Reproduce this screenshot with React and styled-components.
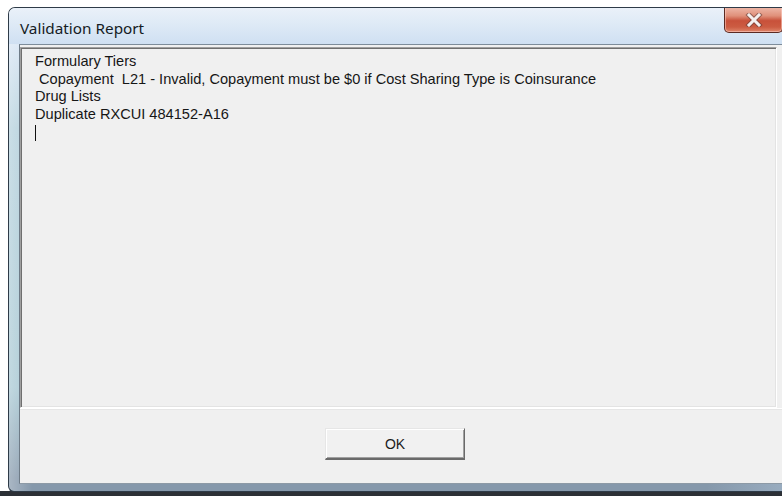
import React from "react";
import styled, { createGlobalStyle } from "styled-components";

const Global = createGlobalStyle`
  html, body { margin: 0; padding: 0; background: #ffffff; }
  body { overflow: hidden; }
`;

const Page = styled.div`
  width: 782px;
  height: 496px;
  box-sizing: border-box;
  padding: 7px 0 0 8px;
  overflow: hidden;
  background: linear-gradient(to bottom, #ffffff 491px, #2c3036 491px);
`;

const Window = styled.div`
  width: 776px;
  height: 485px;
  box-sizing: border-box;
  display: flex;
  flex-direction: column;
  border: 1px solid #2e3b48;
  border-right: none;
  border-radius: 7px 0 0 6px;
  padding: 0 0 7px 10px;
  background:
    linear-gradient(to right, rgba(255,255,255,0.3), rgba(255,255,255,0) 3%, rgba(255,255,255,0) 90%, rgba(200,220,240,0.3)),
    linear-gradient(to bottom, #e2ebf6 0px, #d6e4f3 36px, #b4d0dc 120px, #a8c8d3 380px, #8598ab 470px);
  overflow: hidden;
`;

const TitleBar = styled.div`
  height: 36px;
  flex: none;
  display: flex;
  align-items: flex-start;
  margin-left: -10px;
  padding-left: 11px;
  background: linear-gradient(to bottom, #eaf1f9, #dae7f5 60%, #cfe0f2);
`;

const Title = styled.span`
  font-family: "Noto Sans", "DejaVu Sans", sans-serif;
  font-size: 15.3px;
  color: #151c24;
  line-height: 20px;
  margin-top: 10px;
`;

const CloseButton = styled.div`
  margin-left: auto;
  margin-right: 1px;
  margin-top: -1px;
  width: 59px;
  height: 26px;
  box-sizing: border-box;
  border: 1px solid #5b2a22;
  border-top: none;
  border-radius: 0 0 5px 5px;
  display: flex;
  align-items: center;
  justify-content: center;
  background: linear-gradient(to bottom, #eeb9aa 0%, #e0917b 35%, #c8513a 55%, #cc5c42 80%, #df866b 100%);
  box-shadow: inset 0 0 0 1px rgba(255, 210, 200, 0.55);
`;

const Client = styled.div`
  flex: 1;
  display: flex;
  flex-direction: column;
  background: #f0f0f0;
  border-top: 1px solid #7d8c9a;
  border-left: 1px solid #6e7b87;
  border-bottom: 1px solid #8d9aa6;
`;

const Report = styled.div`
  height: 361px;
  flex: none;
  box-sizing: border-box;
  margin: 2px 7px 0 0;
  padding: 5px 0 0 14px;
  background: #f0f0f0;
  border-top: 1px solid #a0a0a0;
  border-left: 1px solid #a0a0a0;
  border-bottom: 1px solid #ffffff;
  border-right: 1px solid #ffffff;
  box-shadow: inset 1px 1px 0 #6f6f6f, inset -1px -1px 0 #e3e3e3;
  font-family: "Liberation Sans", Arial, sans-serif;
  font-size: 14.6px;
  line-height: 17.7px;
  color: #161616;
`;

const Line = styled.div`
  white-space: pre;
`;

const Caret = styled.div`
  width: 1px;
  height: 16px;
  margin-top: 1px;
  background: #111111;
`;

const ButtonPanel = styled.div`
  flex: 1;
  display: flex;
  justify-content: center;
  align-items: flex-start;
  padding: 19px 14px 0 0;
  border-top: 1px solid #ffffff;
  box-shadow: inset 0 8px 0 -7px #e6e6e6;
`;

const OkButton = styled.button`
  width: 140px;
  height: 32px;
  box-sizing: border-box;
  padding: 0;
  font-family: "Liberation Sans", Arial, sans-serif;
  font-size: 14px;
  color: #1c1c1c;
  background: #f1f1f1;
  border-top: 1px solid #e6e6e6;
  border-left: 1px solid #e6e6e6;
  border-right: 1px solid #6a6a6a;
  border-bottom: 2px solid #6a6a6a;
  box-shadow: inset 1px 1px 0 #ffffff, inset -1px -1px 0 #a0a0a0;
  outline: none;
`;

function CloseGlyph() {
  return (
    <svg width="18" height="14" viewBox="0 0 18 14">
      <path d="M4 2 L14 12 M14 2 L4 12" stroke="#5a3a36" strokeWidth="5" strokeLinecap="square" opacity="0.55" />
      <path d="M4 2 L14 12 M14 2 L4 12" stroke="#f4f0ef" strokeWidth="3" strokeLinecap="square" />
    </svg>
  );
}

const lines = [
  "Formulary Tiers",
  " Copayment  L21 - Invalid, Copayment must be $0 if Cost Sharing Type is Coinsurance",
  "Drug Lists",
  "Duplicate RXCUI 484152-A16",
];

export default function App() {
  return (
    <>
      <Global />
      <Page>
        <Window>
          <TitleBar>
            <Title>Validation Report</Title>
            <CloseButton>
              <CloseGlyph />
            </CloseButton>
          </TitleBar>
          <Client>
            <Report>
              {lines.map((text, i) => (
                <Line key={i}>{text}</Line>
              ))}
              <Caret />
            </Report>
            <ButtonPanel>
              <OkButton>OK</OkButton>
            </ButtonPanel>
          </Client>
        </Window>
      </Page>
    </>
  );
}
